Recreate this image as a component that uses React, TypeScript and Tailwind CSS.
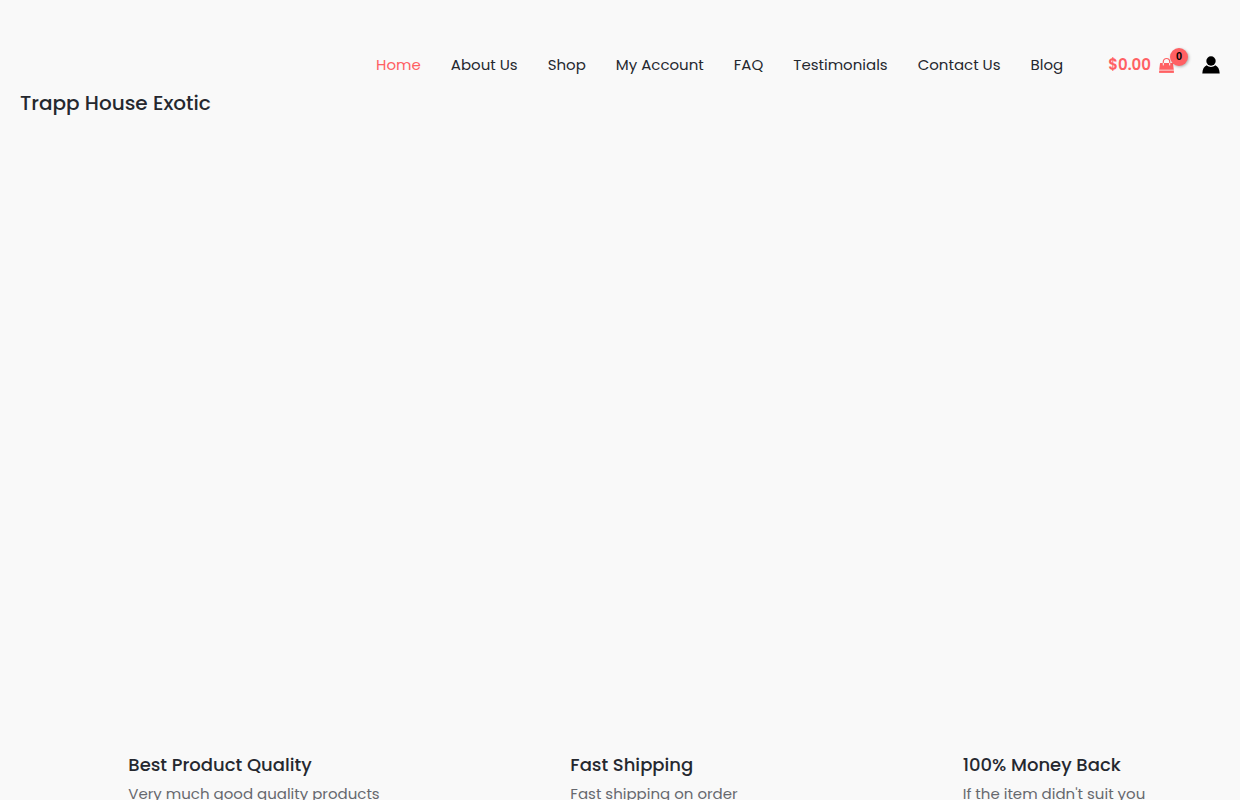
import React from 'react';

const navItems = [
  { label: 'Home', active: true },
  { label: 'About Us' },
  { label: 'Shop' },
  { label: 'My Account' },
  { label: 'FAQ' },
  { label: 'Testimonials' },
  { label: 'Contact Us' },
  { label: 'Blog' },
];

const features = [
  { title: 'Best Product Quality', text: 'Very much good quality products' },
  { title: 'Fast Shipping', text: 'Fast shipping on order' },
  { title: '100% Money Back', text: "If the item didn't suit you" },
];

const BagIcon = () => (
  <svg viewBox="0 0 15 16" className="w-[15px] h-4" aria-hidden="true">
    <path d="M1.1 5.9h12.8l.9 6.9H.2z" fill="currentColor" />
    <path d="M.1 13.5h14.8v2.4H.1z" fill="currentColor" />
    <path d="M4.3 8V4.7a3.2 3.2 0 0 1 6.4 0V8" fill="none" stroke="currentColor" strokeWidth="1.2" />
    <path d="M4.3 6.3V8M10.7 6.3V8" fill="none" stroke="#f9f9f9" strokeWidth="1" strokeLinecap="round" />
  </svg>
);

const UserIcon = () => (
  <svg viewBox="0 0 18 18" className="w-[18px] h-[18px]" aria-hidden="true">
    <circle cx="9" cy="5" r="4.7" fill="#000" />
    <path d="M4.7 9.3C6 10.5 7.4 11 9 11s3-.5 4.3-1.7c2.6 1.2 4.2 3.7 4.4 8.2H.3c.2-4.5 1.8-7 4.4-8.2z" fill="#000" />
  </svg>
);

const Header = () => (
  <header className="flex justify-between px-5 pt-12">
    <a href="#" className="mt-10 text-xl leading-[30px] font-medium whitespace-nowrap">Trapp House Exotic</a>
    <div className="flex items-center h-[34px]">
      <nav className="flex gap-[30px] text-[15px] leading-6">
        {navItems.map((item) => (
          <a key={item.label} href="#" className={item.active ? 'text-[#ff6063]' : 'hover:text-[#ff6063]'}>
            {item.label}
          </a>
        ))}
      </nav>
      <a href="#" className="flex items-center gap-2 ml-[45px] text-[#ff6063]" aria-label="View shopping cart">
        <span className="text-[15px] leading-6 font-semibold">$0.00</span>
        <span className="relative">
          <BagIcon />
          <span className="absolute -top-[9px] left-[11px] w-[18px] h-[18px] rounded-full bg-[#ff6063] text-black font-['Liberation_Sans',sans-serif] text-[11px] leading-4 font-bold text-center shadow-[1px_1px_3px_rgba(0,0,0,0.3)]">
            0
          </span>
        </span>
      </a>
      <a href="#" className="ml-7" aria-label="Account">
        <UserIcon />
      </a>
    </div>
  </header>
);

export default function App() {
  return (
    <div className="min-h-screen bg-[#f9f9f9] text-[#25282f] font-['Poppins','Inter',sans-serif]">
      <Header />
      <main>
        {/* Hero */}
        <section className="h-[632px]" />

        {/* Features */}
        <section className="grid grid-cols-3 px-5">
          {features.map((feature) => (
            <div key={feature.title} className="flex justify-center">
              <div className="w-12 mr-5 shrink-0" />
              <div>
                <h3 className="text-lg leading-[30px] font-medium">{feature.title}</h3>
                <p className="text-[15px] leading-7 text-[#66686e]">{feature.text}</p>
              </div>
            </div>
          ))}
        </section>
      </main>
    </div>
  );
}
